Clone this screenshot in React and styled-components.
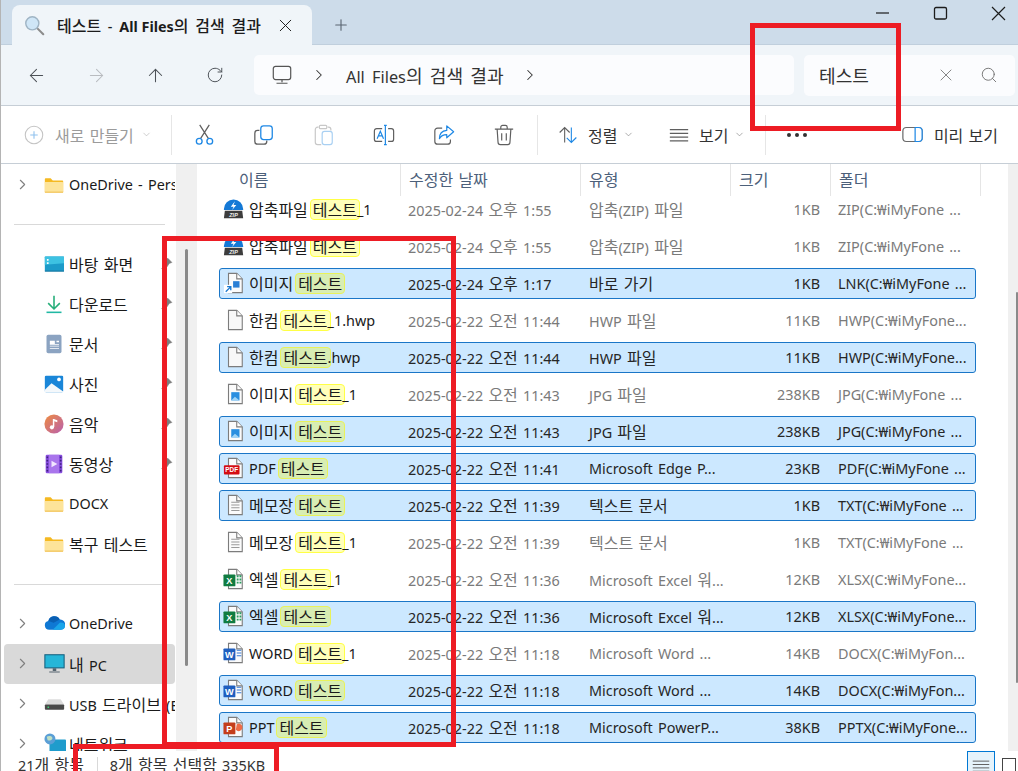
import React from "react";
import styled, { createGlobalStyle } from "styled-components";
import { ArrowLeft, ArrowRight, ArrowUp, RotateCw, ChevronRight, ChevronDown, X, Search, Plus } from "lucide-react";

const GlobalStyle = createGlobalStyle`
  html, body { margin: 0; padding: 0; background: #fff; }
  * { box-sizing: border-box; }
`;

const Window = styled.div`
  position: relative;
  width: 1018px;
  height: 771px;
  overflow: hidden;
  border-left: 1px solid #b4b4b4;
  background: #fff;
  color: #1a1a1a;
  font-family: "Noto Sans", "Noto Sans CJK KR", sans-serif;
  font-size: 14.4px;
  word-spacing: 1.5px;
  white-space: nowrap;
`;

const Hangul = styled.span`
  font-family: "Noto Sans CJK KR", sans-serif;
  font-size: 1.111em;
`;

// Malgun sets hangul wider than the latin next to it, so hangul runs get their own size
const T = ({ children }) => (
  <span>
    {children.split(/([가-힣]+)/).map((part, i) => (i % 2 ? <Hangul key={i}>{part}</Hangul> : part))}
  </span>
);

const TitleBar = styled.div`
  display: flex;
  height: 45px;
  padding-left: 11px;
  background: #cddcea;
  border-bottom: 1px solid #c0cfdd;
`;

const Tab = styled.div`
  display: flex;
  align-items: center;
  width: 300px;
  height: 40px;
  margin-top: 5px;
  padding: 0 16px 0 12px;
  background: #f0f5f9;
  border-radius: 8px 8px 0 0;
  font-weight: 500;
  word-spacing: 3px;
`;

const TabTitle = styled.span`
  flex: 1;
  margin-left: 12px;
  color: #1c1c1c;
`;

const TabStrong = styled.b`
  font-weight: 700;
  word-spacing: 0;
`;

const NewTab = styled.div`
  display: flex;
  align-items: center;
  margin: 5px 0 0 20px;
  color: #5a6470;
`;

const Controls = styled.div`
  display: flex;
  gap: 43px;
  align-items: center;
  height: 26px;
  margin-left: auto;
  padding-right: 12px;
  color: #1c1c1c;
`;

const NavBar = styled.div`
  display: flex;
  align-items: center;
  height: 61px;
  padding-left: 5px;
  background: #f0f5f9;
  border-bottom: 1px solid #c6ced6;
`;

const NavButton = styled.div`
  display: flex;
  justify-content: center;
  width: ${(p) => p.$w || 60}px;
  color: ${(p) => (p.$off ? "#b9bcc0" : "#4c5157")};
`;

const Address = styled.div`
  display: flex;
  align-items: center;
  width: 540px;
  height: 40px;
  margin-left: 9px;
  padding-left: 17px;
  background: #fbfcfe;
  border-radius: 5px;
  font-size: 16.3px;
  word-spacing: 3px;
  color: #333;
`;

const Crumb = styled.span`
  display: flex;
  margin: 0 18px 0 17px;
  color: #333;
`;

const SearchBox = styled.div`
  display: flex;
  align-items: center;
  width: 211px;
  height: 41px;
  margin-left: 10px;
  padding-left: 15px;
  background: #fbfcfe;
  border-radius: 5px;
  font-size: 16.3px;
  color: #333;
`;

const SearchText = styled.span`
  width: 117px;
`;

const SearchIcons = styled.div`
  display: flex;
  align-items: center;
  gap: 24px;
  color: #6d6d6d;
`;

const Toolbar = styled.div`
  display: flex;
  align-items: center;
  height: 58px;
  border-bottom: 1px solid #c6ced6;
`;

const NewButton = styled.div`
  display: flex;
  align-items: center;
  gap: 11px;
  width: 170px;
  padding-left: 23px;
  color: #9b9b9b;
`;

const ToolSep = styled.div`
  width: 1px;
  height: 40px;
  margin: ${(p) => p.$margin || "0"};
  background: #e6e6e6;
`;

const IconButton = styled.div`
  display: flex;
  justify-content: center;
  width: 60px;
`;

const TextButton = styled.div`
  display: flex;
  align-items: center;
  gap: 10px;
  width: ${(p) => p.$w}px;
  color: #333;
`;

const Caret = styled.span`
  display: flex;
  margin-left: -4px;
  color: ${(p) => (p.$off ? "#b4b4b4" : "#808080")};
`;

const Dots = styled.div`
  display: flex;
  gap: 4px;
  margin-left: 21px;
`;

const Dot = styled.i`
  width: 4px;
  height: 4px;
  border-radius: 50%;
  background: #333;
`;

const PreviewButton = styled.div`
  display: flex;
  align-items: center;
  gap: 11px;
  margin-left: auto;
  padding-right: 20px;
  color: #333;
`;

const Body = styled.div`
  display: flex;
  height: 587px;
  overflow: hidden;
`;

const Sidebar = styled.nav`
  flex: none;
  width: 175px;
  padding-top: 1px;
  overflow: hidden;
`;

const NavItem = styled.div`
  display: flex;
  align-items: center;
  width: 171px;
  height: 40px;
  margin-left: 3px;
  padding-bottom: 1px;
  border-radius: 4px;
  background: ${(p) => (p.$active ? "#d9d9d9" : "transparent")};
`;

const ChevronSlot = styled.span`
  display: flex;
  flex: none;
  justify-content: center;
  width: 38px;
  padding-right: 2px;
  margin-right: 2px;
  color: #808080;
`;

const NavIconSlot = styled.span`
  display: flex;
  flex: none;
  width: 25px;
`;

const NavLabel = styled.span`
  flex: 1;
  min-width: 0;
  overflow: hidden;
  color: #1a1a1a;
`;

const PinSlot = styled.span`
  display: flex;
  flex: none;
  width: 15px;
  color: #7d7d7d;
`;

const NavSep = styled.div`
  width: 151px;
  height: 1px;
  margin: ${(p) => p.$top}px 0 19px 13px;
  background: #d9d9d9;
`;

const ScrollTrack = styled.div`
  flex: none;
  display: flex;
  justify-content: ${(p) => (p.$right ? "flex-end" : "center")};
  width: ${(p) => (p.$right ? 10 : 20)}px;
  background: #f0f0f0;
`;

const ScrollThumb = styled.div`
  width: ${(p) => p.$w}px;
  height: ${(p) => p.$h}px;
  margin-top: ${(p) => p.$top}px;
  background: #8a8a8a;
  border-radius: 2px;
`;

const Main = styled.main`
  flex: 1;
  min-width: 0;
  border-left: 1px solid #f0f0f0;
`;

const HeaderRow = styled.div`
  display: grid;
  grid-template-columns: 203px 180px 150px 100px 151px;
  height: 32px;
`;

const HeaderCell = styled.div`
  padding-left: ${(p) => p.$pad || 8}px;
  padding-top: 3px;
  color: #4c607a;
  border-left: ${(p) => (p.$first ? "0" : "1px solid #e5e5e5")};
  border-right: ${(p) => (p.$last ? "1px solid #e5e5e5" : "0")};
`;

const FileList = styled.div`
  display: flex;
  flex-direction: column;
  gap: 6px;
  width: 757px;
  margin: -2px 0 0 22px;
`;

const FileRow = styled.div`
  display: grid;
  grid-template-columns: 188px 181px 156px 75px 155px;
  align-items: center;
  height: 31px;
  padding-bottom: 1px;
  border: 1px solid ${(p) => (p.$selected ? "#1a76c7" : "transparent")};
  border-radius: 3px;
  background: ${(p) => (p.$selected ? "#cce8ff" : "transparent")};
  color: ${(p) => (p.$selected ? "#262626" : "#7a7a7a")};
`;

const NameCell = styled.div`
  display: flex;
  align-items: center;
  color: #1a1a1a;
`;

const FileIconSlot = styled.span`
  display: flex;
  flex: none;
  width: 29px;
  padding-left: 3px;
`;

const Match = styled.span`
  display: flex;
  align-items: center;
  height: 21px;
  margin: 0 -3px 0 2px;
  padding: 0 2px;
  background: ${(p) => (p.$selected ? "#d8edb3" : "#ffffb9")};
  border: 1px solid ${(p) => (p.$selected ? "#e9f25a" : "#ffff45")};
  border-radius: 4px;
`;

const SizeCell = styled.div`
  text-align: right;
`;

const FolderCell = styled.div`
  padding-left: 18px;
`;

const StatusBar = styled.footer`
  display: flex;
  height: 20px;
  padding-left: 17px;
  color: #333;
  overflow: hidden;
`;

const StatusText = styled.span`
  padding-top: 3px;
  line-height: 20px;
`;

const StatusSep = styled.i`
  width: 1px;
  height: 14px;
  margin: 6px 12px 0 13px;
  background: #d9d9d9;
`;

const ViewToggle = styled.div`
  display: flex;
  justify-content: center;
  width: 28px;
  height: 21px;
  margin-left: auto;
  padding-top: 5px;
  background: #e5f3fb;
  border: 1px solid #0078d4;
  color: #444;
`;

const ViewSquare = styled.div`
  width: 14px;
  height: 14px;
  margin: 7px 2px 0 7px;
  border: 1px solid #444;
`;

// the red boxes someone drew over the screenshot
const Annotation = styled.div`
  position: absolute;
  left: ${(p) => p.$x}px;
  top: ${(p) => p.$y}px;
  width: ${(p) => p.$w}px;
  height: ${(p) => p.$h}px;
  border: 5px solid #ed1c24;
  pointer-events: none;
`;

const Svg = ({ size = 20, box = 24, children }) => (
  <svg width={size} height={size} viewBox={`0 0 ${box} ${box}`} fill="none">
    {children}
  </svg>
);

const TabSearchIcon = () => (
  <Svg size={21}>
    <path d="M15 15l7 7" stroke="#8c8c8c" strokeWidth="2.4" strokeLinecap="round" />
    <circle cx="9.5" cy="9.5" r="7.5" fill="#cfe6f7" stroke="#9fb4c4" strokeWidth="1.6" />
  </Svg>
);

const MonitorIcon = () => (
  <Svg size={22}>
    <rect x="2.5" y="2.5" width="19" height="14.5" rx="2.5" stroke="#555" strokeWidth="1.3" />
    <path d="M12 17v3M6 21h12" stroke="#555" strokeWidth="1.3" />
  </Svg>
);

const GRAY = "#5f5f5f";
const BLUE = "#1e88e5";

const PlusCircleIcon = () => (
  <Svg size={20}>
    <circle cx="12" cy="12" r="10.5" stroke="#c4c4c4" strokeWidth="1.3" />
    <path d="M12 7.5v9M7.5 12h9" stroke="#8fc1ee" strokeWidth="1.3" />
  </Svg>
);

const CutIcon = () => (
  <Svg size={23}>
    <path d="M8 16L17 2M16 16L7 2" stroke={GRAY} strokeWidth="1.3" />
    <circle cx="6.5" cy="19" r="3" stroke={BLUE} strokeWidth="1.4" />
    <circle cx="17.5" cy="19" r="3" stroke={BLUE} strokeWidth="1.4" />
  </Svg>
);

const CopyIcon = () => (
  <Svg size={22}>
    <path d="M7 7H5a3 3 0 0 0-3 3v9a3 3 0 0 0 3 3h7a3 3 0 0 0 3-3v-1" stroke={GRAY} strokeWidth="1.4" />
    <rect x="8.5" y="2" width="12.5" height="15" rx="3" stroke={BLUE} strokeWidth="1.4" />
  </Svg>
);

const PasteIcon = () => (
  <Svg size={22}>
    <path d="M6 3.5H5a2.5 2.5 0 0 0-2.5 2.5v14A2.5 2.5 0 0 0 5 22.500h4M16 3.500h1A2.500 2.500 0 0 1 19.500 6v1" stroke="#c8c8c8" strokeWidth="1.3" />
    <rect x="7" y="1.500" width="8" height="3.500" rx="1" stroke="#c8c8c8" strokeWidth="1.3" />
    <rect x="10" y="8" width="11" height="14.500" rx="2.500" stroke="#a9d0f2" strokeWidth="1.300" />
  </Svg>
);

const RenameIcon = () => (
  <Svg size={22}>
    <path d="M10 5H4a2.500 2.500 0 0 0-2.500 2.500v9A2.500 2.500 0 0 0 4 19h6M16.500 5H20a2.500 2.500 0 0 1 2.500 2.500v9A2.500 2.500 0 0 1 20 19h-3.500" stroke={GRAY} strokeWidth="1.300" />
    <path d="M12 1.500h3M12 22.500h3M13.500 1.500v21" stroke={BLUE} strokeWidth="1.300" />
    <path d="M4.500 16L8 8l3.500 8M6 13h4" stroke={BLUE} strokeWidth="1.300" />
  </Svg>
);

const ShareIcon = () => (
  <Svg size={22}>
    <path d="M10 4.500H5A3 3 0 0 0 2 7.500v11.500a3 3 0 0 0 3 3h11a3 3 0 0 0 3-3v-2" stroke={GRAY} strokeWidth="1.300" />
    <path d="M15 2l7.500 6.500L15 15v-3.500c-4 0-6.500 1.500-8 4.500 0-5.500 3-8.500 8-9z" stroke={BLUE} strokeWidth="1.300" strokeLinejoin="round" />
  </Svg>
);

const TrashIcon = () => (
  <Svg size={22}>
    <path d="M2 5.500h20M8.500 5V3.500a2 2 0 0 1 2-2h3a2 2 0 0 1 2 2V5" stroke={GRAY} strokeWidth="1.300" />
    <path d="M4.500 5.500l1 14.500a2.500 2.500 0 0 0 2.500 2.500h8a2.500 2.500 0 0 0 2.500-2.500l1-14.500" stroke={GRAY} strokeWidth="1.300" />
    <path d="M9.500 10v8M14.500 10v8" stroke={GRAY} strokeWidth="1.300" />
  </Svg>
);

const SortIcon = () => (
  <Svg size={20}>
    <path d="M8 21V3M2 9l6-6 6 6" stroke={GRAY} strokeWidth="1.300" />
    <path d="M16 3v18M10.500 15.500l5.500 5.500 6-6" stroke={BLUE} strokeWidth="1.300" />
  </Svg>
);

const LinesIcon = ({ size = 20 }) => (
  <Svg size={size}>
    <path d="M1 5.500h22M1 10h22M1 14.500h22M1 19h22" stroke={GRAY} strokeWidth="1.300" />
  </Svg>
);

const PreviewIcon = () => (
  <Svg size={21}>
    <rect x="1" y="4" width="22" height="16" rx="4" stroke="#6a6a6a" strokeWidth="1.400" />
    <path d="M15 4h4a4 4 0 0 1 4 4v8a4 4 0 0 1-4 4h-4z" fill="#fff" stroke={BLUE} strokeWidth="1.400" />
  </Svg>
);

const PinIcon = () => (
  <Svg size={13}>
    <path d="M14 2l8 8-5 2-4 6-3-3-7 7 7-7-4-4 6-4z" fill="currentColor" stroke="currentColor" strokeWidth="1" />
  </Svg>
);

const FolderIcon = () => (
  <Svg>
    <path d="M1 5a1 1 0 0 1 1-1h6l2.500 2.500H22a1 1 0 0 1 1 1V20a1 1 0 0 1-1 1H2a1 1 0 0 1-1-1z" fill="#f5b922" />
    <path d="M1 8.500h21a1 1 0 0 1 1 1V20a1 1 0 0 1-1 1H2a1 1 0 0 1-1-1z" fill="#fde49a" />
    <path d="M1 20h22v1H1z" fill="#eebb4a" />
  </Svg>
);

const DesktopIcon = () => (
  <Svg>
    <rect x="1" y="3" width="23" height="18" rx="1" fill="#1c9bc9" />
    <path d="M1 3h23v8L1 13z" fill="#3dc2e2" />
    <path d="M3.500 6h2v2h-2zM3.500 10h2v2h-2z" fill="#fff" />
    <path d="M1 20h23v1H1z" fill="#156a94" />
  </Svg>
);

const DownloadIcon = () => (
  <Svg>
    <path d="M12 2v15M5 11l7 7 7-7" stroke="#27ae7a" strokeWidth="1.900" />
    <path d="M3 22h18" stroke="#21b8a4" strokeWidth="1.900" />
  </Svg>
);

const DocumentIcon = () => (
  <Svg>
    <rect x="3" y="1" width="18" height="22" rx="2" fill="#8ba3c1" />
    <path d="M7 8h6v4H7z M15 8h3v2h-3z M7 14h11v1H7z M7 17h11v1H7z M7 12h11v1H7z" fill="#fff" />
  </Svg>
);

const PicturesIcon = () => (
  <Svg>
    <rect x="1" y="2" width="22" height="20" rx="1.500" fill="#1a86d8" />
    <circle cx="18" cy="6.500" r="2.200" fill="#fff" />
    <path d="M1 22v-3l8-8 14 10v1z" fill="#f4f8fb" />
  </Svg>
);

const MusicIcon = () => (
  <Svg>
    <defs>
      <linearGradient id="musicFill" x1="0" y1="0" x2="1" y2="1">
        <stop offset="0" stopColor="#ef8c3e" />
        <stop offset="1" stopColor="#b85fb0" />
      </linearGradient>
    </defs>
    <circle cx="12" cy="12" r="11.500" fill="url(#musicFill)" />
    <path d="M11.500 6v9.500" stroke="#fff" strokeWidth="1.800" />
    <circle cx="9.500" cy="16" r="2.500" fill="#fff" />
    <path d="M11.500 6l4.500 1.500v2.500l-4.500-1.500z" fill="#fff" />
  </Svg>
);

const VideoIcon = () => (
  <Svg>
    <rect x="2" y="1" width="20" height="22" rx="1.500" fill="#8a4fe0" />
    <path d="M6 1h12v22H6z" fill="#a975ec" />
    <path d="M3 3h2v2H3zM3 7h2v2H3zM3 11h2v2H3zM3 15h2v2H3zM3 19h2v2H3zM19 3h2v2h-2zM19 7h2v2h-2zM19 11h2v2h-2zM19 15h2v2h-2zM19 19h2v2h-2z" fill="#3f2080" />
    <path d="M9 8l7 4-7 4z" fill="#f1e6ff" />
  </Svg>
);

const CloudIcon = () => (
  <Svg box={24} size={21}>
    <path d="M6 19a5 5 0 0 1-1-9.900 7 7 0 0 1 13-1.600A5.500 5.500 0 0 1 24 14c0 3-2 5-5 5z" fill="#0f78d4" />
    <path d="M10 19l8-8c3-.5 6 .5 6 4 0 2.500-2 4-4.500 4z" fill="#1aa5ea" />
    <path d="M5 9a7 7 0 0 1 13-1.500L11 11z" fill="#0a5fb3" />
  </Svg>
);

const PcIcon = () => (
  <Svg size={21}>
    <rect x="1" y="2" width="22" height="15" fill="#26b6d8" stroke="#16607f" strokeWidth="1.200" />
    <path d="M10 17.500h4v3h-4zM6 21h12v1.200H6z" fill="#566570" />
  </Svg>
);

const DriveIcon = () => (
  <Svg size={21}>
    <path d="M5 7h14l4 6H1z" fill="#dcdcdc" />
    <rect x="1" y="13" width="22" height="6" rx="1" fill="#4a4a4a" />
    <rect x="4" y="15.500" width="1.800" height="1.500" fill="#3fe07a" />
  </Svg>
);

const NetworkIcon = () => (
  <Svg size={22}>
    <rect x="6" y="7" width="18" height="14" rx="1" fill="#1f9ccc" />
    <circle cx="6.500" cy="6.500" r="6" fill="#5b9fd6" />
    <path d="M3 4c2-1 5-1 6 1s-2 4-5 3z" fill="#bfe0c4" />
  </Svg>
);

const Page = ({ fill = "#fbfbfb" }) => (
  <>
    <path d="M6 1.500h9l6 6v15H6z" fill={fill} stroke="#7c7c7c" strokeWidth="1.200" />
    <path d="M15 1.500v6h6" fill="#fff" stroke="#7c7c7c" strokeWidth="1.200" />
  </>
);

const ZipIcon = () => (
  <Svg size={22}>
    <path d="M1 12a10.500 10.500 0 0 1 21 0v1H1z" fill="#1479d6" />
    <path d="M13 3.500l-4.500 6h3l-1.500 3.500 4.500-5.500h-3z" fill="#fff" />
    <path d="M2 14h19l1 8H1z" fill="#3d3d3d" />
    <text x="11.500" y="21" fontSize="6" fontWeight="700" fontStyle="italic" textAnchor="middle" fill="#eee" fontFamily="Liberation Sans">ZIP</text>
  </Svg>
);

const ShortcutIcon = () => (
  <Svg size={22}>
    <Page />
    <rect x="11" y="10" width="7" height="7" fill="#2a7fd5" />
    <rect x="1" y="14" width="9" height="9" fill="#fff" />
    <path d="M3 21.500l5-5M4.500 16h4v4" stroke="#1878d0" strokeWidth="1.500" />
  </Svg>
);

const BlankIcon = () => (
  <Svg size={22}>
    <Page fill={"#f8f8f8"} />
  </Svg>
);

const ImageIcon = () => (
  <Svg size={22}>
    <Page />
    <rect x="9" y="10" width="9" height="9" fill="#2a8fe0" />
    <path d="M9 19l4-4 5 4z" fill="#9fd4f7" />
  </Svg>
);

const PdfIcon = () => (
  <Svg size={22}>
    <Page />
    <rect x="1" y="9" width="17" height="10" rx="1" fill="#d40d12" />
    <text x="9.500" y="16.800" fontSize="7" fontWeight="700" textAnchor="middle" fill="#fff" fontFamily="Liberation Sans">PDF</text>
  </Svg>
);

const NoteIcon = () => (
  <Svg size={22}>
    <Page />
    <path d="M9 9h9M9 12h9M9 15h9M9 18h9" stroke="#9a9a9a" strokeWidth="1.100" />
  </Svg>
);

const OfficeIcon = ({ color, letter, children }) => (
  <Svg size={22}>
    <Page />
    {children}
    <rect x="0.500" y="7" width="13" height="13" rx="1" fill={color} />
    <text x="7" y="17.500" fontSize="10" fontWeight="700" textAnchor="middle" fill="#fff" fontFamily="Liberation Sans">{letter}</text>
  </Svg>
);

const XlsIcon = () => (
  <OfficeIcon color="#107c41" letter="X">
    <path d="M15 8h2v2h-2zM18 8h2v2h-2zM15 11.500h2v2h-2zM18 11.500h2v2h-2zM15 15h2v2h-2zM18 15h2v2h-2z" fill="#2f9e63" />
  </OfficeIcon>
);

const DocIcon = () => (
  <OfficeIcon color="#1f5fbf" letter="W">
    <path d="M15 9h5M15 12h5M15 15h5" stroke="#3a7bd5" strokeWidth="1.200" />
  </OfficeIcon>
);

const PptIcon = () => (
  <OfficeIcon color="#c43e1c" letter="P">
    <path d="M15 9a4 4 0 1 1-1 6z" fill="#ed6c47" />
  </OfficeIcon>
);

const NavEntry = ({ icon, label, chevron, pinned, active }) => (
  <NavItem $active={active}>
    <ChevronSlot>{chevron && <ChevronRight size={17} strokeWidth={1.6} />}</ChevronSlot>
    <NavIconSlot>{icon}</NavIconSlot>
    <NavLabel><T>{label}</T></NavLabel>
    {pinned && <PinSlot><PinIcon /></PinSlot>}
  </NavItem>
);

const FileEntry = ({ file }) => {
  const Icon = file.icon;
  return (
    <FileRow $selected={file.selected}>
      <NameCell>
        <FileIconSlot><Icon /></FileIconSlot>
        <T>{file.name}</T>
        <Match $selected={file.selected}><T>테스트</T></Match>
        {file.suffix}
      </NameCell>
      <div><T>{file.date}</T></div>
      <div><T>{file.type}</T></div>
      <SizeCell>{file.size}</SizeCell>
      <FolderCell>{file.folder}</FolderCell>
    </FileRow>
  );
};

const D24 = "2025-02-24";
const D22 = "2025-02-22 오전";

const files = [
  { icon: ZipIcon, name: "압축파일", suffix: "_1", date: `${D24} 오후 1:55`, type: "압축(ZIP) 파일", size: "1KB", folder: "ZIP(C:₩iMyFone ..." },
  { icon: ZipIcon, name: "압축파일", suffix: "", date: `${D24} 오후 1:55`, type: "압축(ZIP) 파일", size: "1KB", folder: "ZIP(C:₩iMyFone ..." },
  { icon: ShortcutIcon, name: "이미지", suffix: "", date: `${D24} 오후 1:17`, type: "바로 가기", size: "1KB", folder: "LNK(C:₩iMyFone ...", selected: true },
  { icon: BlankIcon, name: "한컴", suffix: "_1.hwp", date: `${D22} 11:44`, type: "HWP 파일", size: "11KB", folder: "HWP(C:₩iMyFone..." },
  { icon: BlankIcon, name: "한컴", suffix: ".hwp", date: `${D22} 11:44`, type: "HWP 파일", size: "11KB", folder: "HWP(C:₩iMyFone...", selected: true },
  { icon: ImageIcon, name: "이미지", suffix: "_1", date: `${D22} 11:43`, type: "JPG 파일", size: "238KB", folder: "JPG(C:₩iMyFone ..." },
  { icon: ImageIcon, name: "이미지", suffix: "", date: `${D22} 11:43`, type: "JPG 파일", size: "238KB", folder: "JPG(C:₩iMyFone ...", selected: true },
  { icon: PdfIcon, name: "PDF", suffix: "", date: `${D22} 11:41`, type: "Microsoft Edge P...", size: "23KB", folder: "PDF(C:₩iMyFone ...", selected: true },
  { icon: NoteIcon, name: "메모장", suffix: "", date: `${D22} 11:39`, type: "텍스트 문서", size: "1KB", folder: "TXT(C:₩iMyFone ...", selected: true },
  { icon: NoteIcon, name: "메모장", suffix: "_1", date: `${D22} 11:39`, type: "텍스트 문서", size: "1KB", folder: "TXT(C:₩iMyFone ..." },
  { icon: XlsIcon, name: "엑셀", suffix: "_1", date: `${D22} 11:36`, type: "Microsoft Excel 워...", size: "12KB", folder: "XLSX(C:₩iMyFone..." },
  { icon: XlsIcon, name: "엑셀", suffix: "", date: `${D22} 11:36`, type: "Microsoft Excel 워...", size: "12KB", folder: "XLSX(C:₩iMyFone...", selected: true },
  { icon: DocIcon, name: "WORD", suffix: "_1", date: `${D22} 11:18`, type: "Microsoft Word ...", size: "14KB", folder: "DOCX(C:₩iMyFon..." },
  { icon: DocIcon, name: "WORD", suffix: "", date: `${D22} 11:18`, type: "Microsoft Word ...", size: "14KB", folder: "DOCX(C:₩iMyFon...", selected: true },
  { icon: PptIcon, name: "PPT", suffix: "", date: `${D22} 11:18`, type: "Microsoft PowerP...", size: "38KB", folder: "PPTX(C:₩iMyFone...", selected: true },
];

const App = () => (
  <Window>
    <GlobalStyle />
    <TitleBar>
      <Tab>
        <TabSearchIcon />
        <TabTitle><T>테스트 - </T><TabStrong>All Files</TabStrong><T>의 검색 결과</T></TabTitle>
        <X size={21} strokeWidth={1.1} />
      </Tab>
      <NewTab><Plus size={18} strokeWidth={1.5} /></NewTab>
      <Controls>
        <svg width="15" height="15" viewBox="0 0 15 15"><path d="M1 7h13" stroke="#1c1c1c" strokeWidth="1.2" /></svg>
        <svg width="15" height="15" viewBox="0 0 15 15"><rect x="1.500" y="1.500" width="12" height="11.500" rx="1.500" fill="none" stroke="#1c1c1c" strokeWidth="1.300" /></svg>
        <svg width="15" height="15" viewBox="0 0 15 15"><path d="M1 1l13 13M14 1L1 14" stroke="#1c1c1c" strokeWidth="1.200" /></svg>
      </Controls>
    </TitleBar>

    <NavBar>
      <NavButton><ArrowLeft size={21} strokeWidth={1.2} /></NavButton>
      <NavButton $off><ArrowRight size={21} strokeWidth={1.2} /></NavButton>
      <NavButton $w={59}><ArrowUp size={21} strokeWidth={1.2} /></NavButton>
      <NavButton><RotateCw size={18} strokeWidth={1.3} /></NavButton>
      <Address>
        <MonitorIcon />
        <Crumb><ChevronRight size={18} strokeWidth={1.4} /></Crumb>
        <T>All Files의 검색 결과</T>
        <Crumb><ChevronRight size={18} strokeWidth={1.4} /></Crumb>
      </Address>
      <SearchBox>
        <SearchText><T>테스트</T></SearchText>
        <SearchIcons>
          <X size={20} strokeWidth={1} />
          <Search size={18} strokeWidth={1.2} />
        </SearchIcons>
      </SearchBox>
    </NavBar>

    <Toolbar>
      <NewButton>
        <PlusCircleIcon />
        <T>새로 만들기</T>
        <Caret $off><ChevronDown size={11} strokeWidth={1.4} /></Caret>
      </NewButton>
      <ToolSep $margin="0 2px 0 0" />
      <IconButton><CutIcon /></IconButton>
      <IconButton><CopyIcon /></IconButton>
      <IconButton><PasteIcon /></IconButton>
      <IconButton><RenameIcon /></IconButton>
      <IconButton><ShareIcon /></IconButton>
      <IconButton><TrashIcon /></IconButton>
      <ToolSep $margin="0 20px 0 3px" />
      <TextButton $w={111}>
        <SortIcon />
        <T>정렬</T>
        <Caret><ChevronDown size={11} strokeWidth={1.4} /></Caret>
      </TextButton>
      <TextButton $w={96}>
        <LinesIcon />
        <T>보기</T>
        <Caret><ChevronDown size={11} strokeWidth={1.4} /></Caret>
      </TextButton>
      <ToolSep />
      <Dots><Dot /><Dot /><Dot /></Dots>
      <PreviewButton>
        <PreviewIcon />
        <T>미리 보기</T>
      </PreviewButton>
    </Toolbar>

    <Body>
      <Sidebar>
        <NavEntry icon={<FolderIcon />} label="OneDrive - Personal" chevron />
        <NavSep $top={19} />
        <NavEntry icon={<DesktopIcon />} label="바탕 화면" pinned />
        <NavEntry icon={<DownloadIcon />} label="다운로드" pinned />
        <NavEntry icon={<DocumentIcon />} label="문서" pinned />
        <NavEntry icon={<PicturesIcon />} label="사진" pinned />
        <NavEntry icon={<MusicIcon />} label="음악" pinned />
        <NavEntry icon={<VideoIcon />} label="동영상" pinned />
        <NavEntry icon={<FolderIcon />} label="DOCX" />
        <NavEntry icon={<FolderIcon />} label="복구 테스트" />
        <NavSep $top={20} />
        <NavEntry icon={<CloudIcon />} label="OneDrive" chevron />
        <NavEntry icon={<PcIcon />} label="내 PC" chevron active />
        <NavEntry icon={<DriveIcon />} label="USB 드라이브 (E:)" chevron />
        <NavEntry icon={<NetworkIcon />} label="네트워크" chevron />
      </Sidebar>
      <ScrollTrack>
        <ScrollThumb $w={3} $h={417} $top={85} />
      </ScrollTrack>
      <Main>
        <HeaderRow>
          <HeaderCell $first $pad={42}><T>이름</T></HeaderCell>
          <HeaderCell><T>수정한 날짜</T></HeaderCell>
          <HeaderCell><T>유형</T></HeaderCell>
          <HeaderCell><T>크기</T></HeaderCell>
          <HeaderCell $last><T>폴더</T></HeaderCell>
        </HeaderRow>
        <FileList>
          {files.map((file, i) => (
            <FileEntry key={i} file={file} />
          ))}
        </FileList>
      </Main>
      <ScrollTrack $right>
        <ScrollThumb $w={2} $h={391} $top={128} />
      </ScrollTrack>
    </Body>

    <StatusBar>
      <StatusText><T>21개 항목</T></StatusText>
      <StatusSep />
      <StatusText><T>8개 항목 선택함 335KB</T></StatusText>
      <ViewToggle><LinesIcon size={18} /></ViewToggle>
      <ViewSquare />
    </StatusBar>

    <Annotation $x={749} $y={23} $w={151} $h={108} />
    <Annotation $x={161} $y={236} $w={294} $h={511} />
    <Annotation $x={72} $y={744} $w={206} $h={40} />
  </Window>
);

export default App;
